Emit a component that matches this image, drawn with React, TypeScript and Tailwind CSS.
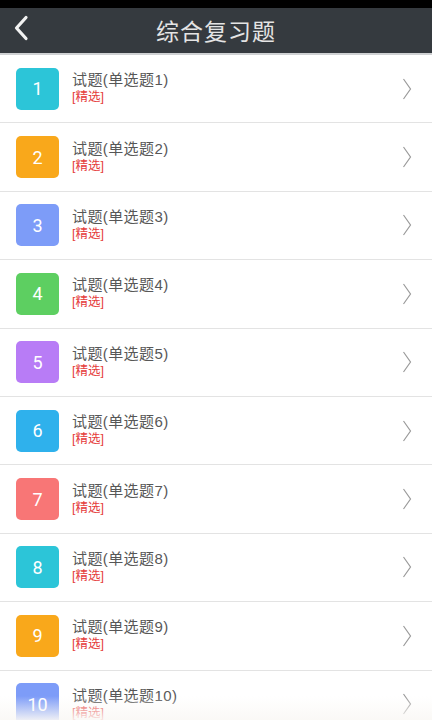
import React from "react";

const colors = [
  "bg-[#2cc5d8]",
  "bg-[#f9a81b]",
  "bg-[#7d9cf8]",
  "bg-[#5dcf61]",
  "bg-[#b87cf6]",
  "bg-[#2fb1ec]",
  "bg-[#f87676]",
  "bg-[#2cc5d8]",
  "bg-[#f9a81b]",
  "bg-[#7d9cf8]",
];

const font = { fontFamily: '"Noto Sans CJK SC", "Noto Sans", sans-serif' };
const listFont = { fontFamily: '"Liberation Sans", "Noto Sans CJK SC", sans-serif' };

export default function App() {
  return (
    <div className="relative w-[432px] h-[720px] overflow-hidden bg-white" style={font}>
      <div className="h-[8px] bg-black" />
      <div className="relative h-[45px] bg-[#353a3f] flex items-center justify-center">
        <svg className="absolute left-[12px] top-[6px]" width="18" height="28" viewBox="0 0 18 28">
          <path d="M14 3.5 L4.5 14 L14 24.5" fill="none" stroke="#f2f2f2" strokeWidth="3.2" strokeLinecap="round" strokeLinejoin="round" />
        </svg>
        <span className="text-[23px] text-[#e4e4e4] tracking-[1px] leading-none">综合复习题</span>
      </div>
      <div className="h-[2px] bg-[#cfd1d3]" />
      <div className="flex flex-col">
        {colors.map((c, i) => (
          <div key={i} className="h-[68.4px] shrink-0 box-border border-b border-[#e3e3e3] flex items-center pl-[16px] pr-[20px]">
            <div className={`w-[43px] h-[42px] rounded-[5px] ${c} flex items-center justify-center text-white text-[18px]`} style={{ fontFamily: '"Roboto", sans-serif' }}>
              {i + 1}
            </div>
            <div className="ml-[13px] flex flex-col flex-1 -mt-[1px]" style={listFont}>
              <span className="text-[15px] leading-[18px] tracking-[0.4px] text-[#575757]">试题(单选题{i + 1})</span>
              <span className="text-[12.5px] leading-[15px] mt-[1px] text-[#e53b3b]">[精选]</span>
            </div>
            <svg width="10" height="24" viewBox="0 0 10 24">
              <path d="M1.5 2 L8.5 12 L1.5 22" fill="none" stroke="#9a9a9a" strokeWidth="1.2" />
            </svg>
          </div>
        ))}
      </div>
      <div className="absolute left-0 right-0 bottom-0 h-[24px] bg-gradient-to-b from-[rgba(255,255,255,0)] to-[rgba(250,248,245,0.9)]" />
    </div>
  );
}
